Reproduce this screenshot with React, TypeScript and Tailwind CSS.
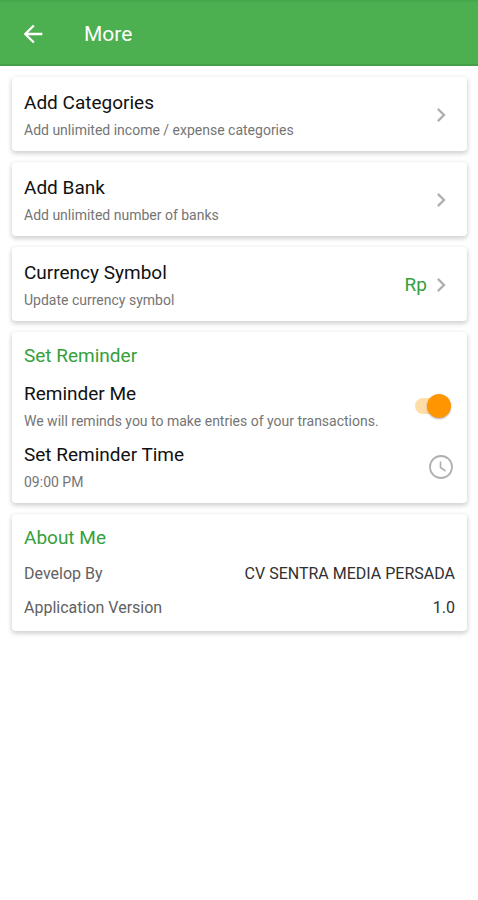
import { useState } from "react"

const settings = [
  { title: "Add Categories", description: "Add unlimited income / expense categories", value: "" },
  { title: "Add Bank", description: "Add unlimited number of banks", value: "" },
  { title: "Currency Symbol", description: "Update currency symbol", value: "Rp" },
]

const about = [
  { label: "Develop By", value: "CV SENTRA MEDIA PERSADA" },
  { label: "Application Version", value: "1.0" },
]

const cardClass = "w-full rounded-sm bg-white px-3 shadow-[0_2px_4px_1px_rgba(0,0,0,0.17)]"

function BackIcon() {
  return (
    <svg className="size-7" viewBox="0 0 24 24" fill="currentColor" aria-hidden="true">
      <path d="M20 11H7.83l5.59-5.59L12 4l-8 8 8 8 1.41-1.41L7.83 13H20v-2z" />
    </svg>
  )
}

function ChevronIcon() {
  return (
    <svg className="size-7 text-[#b0b0b0]" viewBox="0 0 24 24" fill="currentColor" aria-hidden="true">
      <path d="M10 6L8.59 7.41 13.17 12l-4.58 4.59L10 18l6-6z" />
    </svg>
  )
}

function ClockIcon() {
  return (
    <svg className="size-7 text-[#b0b0b0]" viewBox="0 0 28 28" fill="none" stroke="currentColor" aria-hidden="true">
      <circle cx="14" cy="14" r="11" strokeWidth="1.8" />
      <path d="M13.5 8.5v6l5 3.5" strokeWidth="1.6" />
    </svg>
  )
}

function RowText({ title, description }: { title: string; description: string }) {
  return (
    <span className="flex flex-col gap-[3px] text-left">
      <span className="text-[19px] leading-7 text-[#111111]">{title}</span>
      <span className="text-sm leading-5 text-[#757575]">{description}</span>
    </span>
  )
}

export default function App() {
  const [reminder, setReminder] = useState(true)

  return (
    <div className="min-h-screen bg-white font-[Roboto,sans-serif]">
      <header className="flex h-[66px] items-center gap-[37px] border-t-2 border-b-2 border-t-[#47a84b] border-b-[#43a047] bg-[#4caf50] px-[19px] pt-[2px] text-white">
        <button type="button" aria-label="Back">
          <BackIcon />
        </button>
        <h1 className="text-[21px] leading-7">More</h1>
      </header>

      <main className="flex flex-col gap-[11px] py-[11px] pr-[11px] pl-3">
        {settings.map((item) => (
          <button key={item.title} type="button" className={`${cardClass} flex items-center justify-between pt-3 pb-[11px]`}>
            <RowText title={item.title} description={item.description} />
            <span className="flex items-center">
              {item.value && <span className="text-[19px] leading-7 text-[#35a03c]">{item.value}</span>}
              <ChevronIcon />
            </span>
          </button>
        ))}

        <section className={`${cardClass} flex flex-col gap-[10px] pt-[10px] pb-[11px]`}>
          <h2 className="text-[19px] leading-7 text-[#35a03c]">Set Reminder</h2>
          <label className="flex items-center justify-between">
            <RowText title="Reminder Me" description="We will reminds you to make entries of your transactions." />
            <span className="relative flex h-6 w-10 shrink-0 items-center">
              <input
                type="checkbox"
                role="switch"
                checked={reminder}
                onChange={(e) => setReminder(e.target.checked)}
                className="peer h-4 w-9 appearance-none rounded-full bg-[#bdbdbd] checked:bg-[#ffdda8]"
              />
              <span className="pointer-events-none absolute left-0 size-6 rounded-full bg-[#fafafa] shadow-[0_1px_2px_rgba(0,0,0,0.3)] peer-checked:left-3 peer-checked:bg-[#ff9500]" />
            </span>
          </label>
          <button type="button" className="flex items-center justify-between">
            <RowText title="Set Reminder Time" description="09:00 PM" />
            <ClockIcon />
          </button>
        </section>

        <section className={`${cardClass} flex flex-col gap-[10px] pt-[10px] pb-[11px]`}>
          <h2 className="text-[19px] leading-7 text-[#35a03c]">About Me</h2>
          <dl className="flex flex-col gap-[10px]">
            {about.map((row) => (
              <div key={row.label} className="flex items-center justify-between text-base leading-6">
                <dt className="text-[#616161]">{row.label}</dt>
                <dd className="text-[#303030]">{row.value}</dd>
              </div>
            ))}
          </dl>
        </section>
      </main>
    </div>
  )
}
